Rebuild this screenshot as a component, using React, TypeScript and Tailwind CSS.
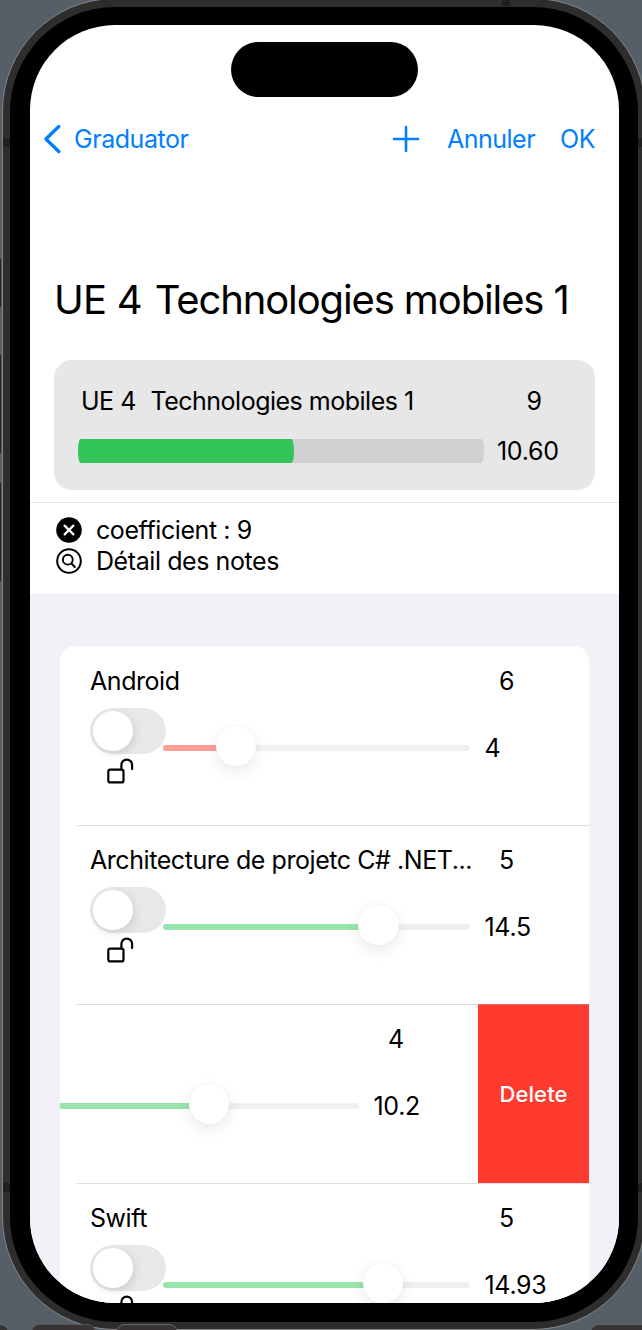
import type { ReactNode } from "react";

type Note = {
  title?: string;
  coefficient: string;
  value: string;
  fill: string;
  ratio: number;
};

const notes: Note[] = [
  { title: "Android", coefficient: "6", value: "4", fill: "bg-[#ff9d97]", ratio: 73 },
  { title: "Architecture de projetc C# .NET...", coefficient: "5", value: "14.5", fill: "bg-[#99e3ac]", ratio: 215.5 },
  { coefficient: "4", value: "10.2", fill: "bg-[#99e3ac]", ratio: 157 },
  { title: "Swift", coefficient: "5", value: "14.93", fill: "bg-[#99e3ac]", ratio: 220 },
];

function OpenLock() {
  return (
    <svg className="ml-[17px] mt-[3px] h-[28px] w-[28px] shrink-0" viewBox="0 0 28 28" fill="none" stroke="#000" strokeWidth="2.2">
      <rect x="1.3" y="12.6" width="15.2" height="12.8" rx="2" />
      <path d="M14.4 12.6V7.9a5.35 5.35 0 0 1 10.7 0v4.2" strokeLinecap="round" />
    </svg>
  );
}

function NoteContent({ note }: { note: Note }) {
  return (
    <div className="flex h-[179px] w-[529px] shrink-0 flex-col pl-[29.5px]">
      <div className="flex h-[62px] pt-[19px] leading-[32px]">
        <span className="w-[409.5px] shrink-0 whitespace-nowrap pl-[0.5px] tracking-[-0.44px]">{note.title}</span>
        <span>{note.coefficient}</span>
      </div>
      <div className="flex">
        <div className="flex w-[73.5px] shrink-0 flex-col">
          <div className="flex h-[46px] w-[76px] items-center rounded-full bg-[#e8e8e8] pl-[3px]">
            <div className="size-[40.5px] rounded-full bg-white shadow-[2px_3px_8px_rgba(0,0,0,0.11)]" />
          </div>
          <OpenLock />
        </div>
        <div className="relative mt-[36.5px] h-[6px] w-[307px] shrink-0 rounded-full bg-[#f0f0f0]">
          <div className={`h-full rounded-full ${note.fill}`} style={{ width: note.ratio }} />
          <div
            className="absolute top-[-19px] size-[40.5px] rounded-full bg-white shadow-[0_5px_16px_rgba(0,0,0,0.09),0_0_2px_rgba(0,0,0,0.05)]"
            style={{ left: note.ratio - 20.5 }}
          />
        </div>
        <span className="ml-[14.5px] mt-[24px] leading-[32px]">{note.value}</span>
      </div>
    </div>
  );
}

function NoteRow({ note, first, swiped }: { note: Note; first?: boolean; swiped?: boolean }) {
  return (
    <div className="relative flex h-[179px] shrink-0 overflow-hidden">
      {swiped ? (
        <>
          <div className="-ml-[111px] flex">
            <NoteContent note={note} />
          </div>
          <button className="flex h-full w-[111px] shrink-0 items-center justify-center bg-[#ff3b30] pt-px text-[22px] font-medium tracking-[0.1px] text-white">
            Delete
          </button>
        </>
      ) : (
        <NoteContent note={note} />
      )}
      {!first && <div className="absolute left-[17px] right-0 top-0 h-px bg-[#b0b0b4]/40" />}
    </div>
  );
}

function InfoLine({ icon, children }: { icon: ReactNode; children: ReactNode }) {
  return (
    <div className="flex h-[31px] items-center gap-[14.5px] pl-[25.5px] tracking-[-0.42px]">
      {icon}
      <span>{children}</span>
    </div>
  );
}

function Screen() {
  return (
    <div className="flex h-[1278px] w-[589px] flex-col overflow-hidden rounded-[85px] bg-white">
      <div className="ml-[201px] mt-[17px] h-[55px] w-[187px] shrink-0 rounded-full bg-black" />
      <nav className="mt-[22px] flex h-[40px] shrink-0 items-center pl-[13px] pr-[24px] text-[#0080ff]">
        <svg className="h-[30px] w-[19px]" viewBox="0 0 19 30" fill="none" stroke="currentColor" strokeWidth="3.4" strokeLinecap="round" strokeLinejoin="round">
          <path d="M15.8 2.5 2.9 15l12.9 12.5" />
        </svg>
        <span className="ml-[12px] pt-[2px] tracking-[-0.45px]">Graduator</span>
        <svg className="ml-auto size-[28px]" viewBox="0 0 28 28" stroke="currentColor" strokeWidth="2.6" strokeLinecap="round">
          <path d="M14 2v24M2 14h24" />
        </svg>
        <span className="ml-[27px] pt-[2px] tracking-[-0.5px]">Annuler</span>
        <span className="ml-[25px] pt-[2px] tracking-[-0.5px]">OK</span>
      </nav>
      <h1 className="mt-[115px] flex h-[51px] shrink-0 items-center gap-[13px] whitespace-nowrap pl-[24px] text-[40px]">
        <span className="tracking-[-0.8px]">UE 4</span>
        <span className="tracking-[-1.12px]">Technologies mobiles 1</span>
      </h1>
      <section className="ml-[24px] mt-[35px] flex h-[130px] w-[541px] shrink-0 flex-col rounded-[18px] bg-[#e7e7e7] pl-[24px] pt-[26px]">
        <div className="flex h-[32px] items-center pl-[3px]">
          <span className="w-[69.5px] tracking-[-0.5px]">UE 4</span>
          <span className="w-[376px] tracking-[-0.5px]">Technologies mobiles 1</span>
          <span>9</span>
        </div>
        <div className="mt-[15.5px] flex h-[34px] items-center">
          <div className="h-[24px] w-[406px] rounded-[3px/14px] bg-[#d0d0d0]">
            <div className="h-full w-[216px] rounded-[3px/14px] bg-[#33c559]" />
          </div>
          <span className="ml-[13px] pt-[2px]">10.60</span>
        </div>
      </section>
      <section className="mt-[12px] h-[92px] shrink-0 border-t border-[#e2e2e3] pt-[12px]">
        <InfoLine
          icon={
            <svg className="mb-[2px] size-[26px]" viewBox="0 0 26 26" fill="none" strokeLinecap="round">
              <circle cx="13" cy="13" r="12.8" fill="#000" />
              <path d="m8.6 8.6 8.8 8.8M17.4 8.6l-8.8 8.8" stroke="#fff" strokeWidth="2.2" />
            </svg>
          }
        >
          coefficient : 9
        </InfoLine>
        <InfoLine
          icon={
            <svg className="mb-[2px] size-[26px]" viewBox="0 0 26 26" fill="none" stroke="#000" strokeLinecap="round">
              <circle cx="13" cy="13" r="11.8" strokeWidth="2" />
              <circle cx="11.8" cy="11.7" r="4.9" strokeWidth="1.9" />
              <path d="m15.5 15.5 3.3 3.4" strokeWidth="2.1" />
            </svg>
          }
        >
          Détail des notes
        </InfoLine>
      </section>
      <main className="flex min-h-0 flex-1 flex-col bg-[#f2f1f7] px-[30px] pt-[52px]">
        <div className="flex min-h-0 w-[529px] flex-1 flex-col overflow-hidden rounded-t-[15px] bg-white">
          {notes.map((note, index) => (
            <NoteRow key={index} note={note} first={index === 0} swiped={index === 2} />
          ))}
        </div>
      </main>
    </div>
  );
}

export default function App() {
  return (
    <div className="relative h-[1330px] w-[642px] overflow-hidden bg-[#565e67] font-['Inter','Liberation_Sans',sans-serif] text-[25px] tracking-[-0.3px] text-black">
      <div className="absolute left-0 top-[259px] h-[48px] w-[1px] bg-[#242122]" />
      <div className="absolute left-0 top-[355px] h-[98px] w-[1px] bg-[#242122]" />
      <div className="absolute left-0 top-[483px] h-[98px] w-[1px] bg-[#242122]" />
      <div className="-mt-[2px] ml-[2px] h-[1332px] w-[644px] rounded-[113px] border border-[#858585] bg-[#2d2d2d] pl-[7px] pt-[8px]">
        <div className="h-[1315px] w-[628px] rounded-[105px] bg-black pl-[20px] pt-[18px]">
          <Screen />
        </div>
      </div>
      <div className="absolute left-[3px] top-[138px] h-[9px] w-[7px] bg-[#1f1f1f]" />
      <div className="absolute left-[638px] top-[138px] h-[9px] w-[4px] bg-[#1f1f1f]" />
      <div className="absolute left-[502px] top-0 h-[6px] w-[8px] bg-[#1f1f1f]" />
      <div className="absolute left-[3px] top-[1183px] h-[9px] w-[7px] bg-[#1f1f1f]" />
      <div className="absolute left-[638px] top-[1183px] h-[9px] w-[4px] bg-[#1f1f1f]" />
      <div className="absolute left-[-40px] top-[1324px] h-[20px] w-[49px] rounded-[9px] border border-[#666] bg-[#383435]" />
      <div className="absolute left-[31px] top-[1324px] h-[20px] w-[65px] rounded-[9px] border border-[#555] bg-[#383435]" />
      <div className="absolute left-[116px] top-[1324px] h-[20px] w-[62px] rounded-[9px] border border-[#666] bg-[#383435]" />
      <div className="absolute left-[590px] top-[1324px] h-[20px] w-[70px] rounded-[9px] border border-[#666] bg-[#383435]" />
    </div>
  );
}
